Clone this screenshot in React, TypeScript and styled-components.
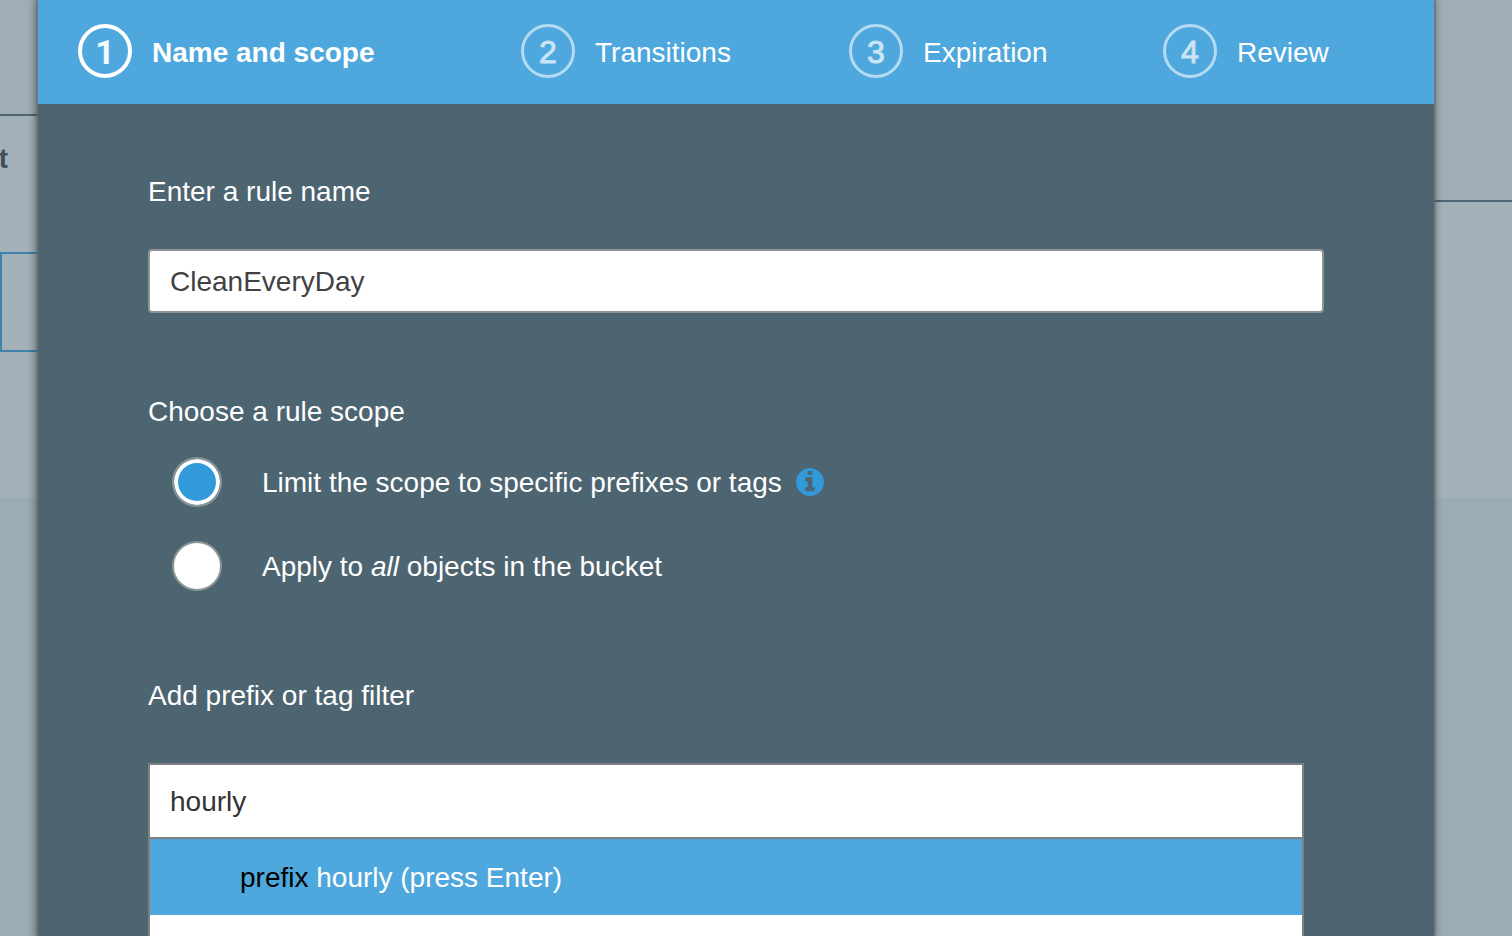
import React, { useState } from "react";
import styled, { createGlobalStyle } from "styled-components";

const GlobalStyle = createGlobalStyle`
  *, *::before, *::after { box-sizing: border-box; }
  body {
    margin: 0;
    background: #9bacb6;
    color: #ffffff;
    font: 28px/40px "Liberation Sans", Arial, sans-serif;
  }
  button, input { font: inherit; }
`;

const Page = styled.div`
  display: grid;
  grid-template-columns: 38px minmax(0, 1fr) 78px;
  min-height: 100vh;
`;

const Backdrop = styled.div`
  display: flex;
  flex-direction: column;
  overflow: hidden;
`;

const BackdropBar = styled.div<{ $height: number }>`
  height: ${(p) => p.$height}px;
  background: #a1adb5;
  border-bottom: 2px solid #4c6678;
`;

const BackdropPanel = styled.div<{ $height: number }>`
  height: ${(p) => p.$height}px;
  background: #a5b1b9;
`;

const ColumnTitle = styled.div`
  padding: 23px 0 73px;
  display: flex;
  justify-content: flex-end;
  width: 8px;
  color: #444f57;
  font-weight: bold;
`;

const BackdropField = styled.div`
  height: 100px;
  border: 2px solid #3f82ae;
  border-right: 0;
`;

const Dialog = styled.main`
  position: relative;
  display: flex;
  flex-direction: column;
  background: #4d6471;
  box-shadow: 0 0 0 2px rgba(110, 110, 110, 0.6), -1px 0 8px 2px rgba(0, 0, 0, 0.4);
  clip-path: inset(0 -20px);
`;

const Steps = styled.ol`
  display: grid;
  grid-template-columns: 443fr 328fr 314fr 271fr;
  margin: 0;
  padding: 24px 0 22px 40px;
  list-style: none;
  background: #4ea8dd;
`;

const StepButton = styled.button<{ $active: boolean }>`
  display: flex;
  align-items: flex-start;
  gap: 20px;
  padding: 0;
  border: 0;
  background: none;
  color: #ffffff;
  font-weight: ${(p) => (p.$active ? "bold" : "normal")};
  line-height: 58px;
  white-space: nowrap;
  cursor: pointer;
`;

const StepNumber = styled.span<{ $active: boolean }>`
  display: flex;
  align-items: center;
  justify-content: center;
  width: 54px;
  height: 54px;
  padding-top: 2px;
  border: ${(p) => (p.$active ? "4px solid #ffffff" : "3px solid #b5dbf1")};
  border-radius: 50%;
  color: ${(p) => (p.$active ? "#f4fafd" : "#d0e8f6")};
  font-family: ${(p) => (p.$active ? "Roboto" : '"Liberation Sans"')}, sans-serif;
  font-size: ${(p) => (p.$active ? 34 : 32)}px;
  font-weight: ${(p) => (p.$active ? 700 : 400)};
  -webkit-text-stroke: ${(p) => (p.$active ? "0" : "1px #c4e2f4")};
`;

const Form = styled.form`
  display: flex;
  flex: 1;
  flex-direction: column;
  padding: 68px 110px 0;
`;

const Label = styled.label`
  display: block;
`;

const NameInput = styled.input`
  height: 64px;
  margin: 37px 0 79px;
  padding: 2px 20px 0;
  border: 2px solid #8c9494;
  border-radius: 4px;
  outline: 0;
  background: #ffffff;
  color: #3f4145;
`;

const ScopeGroup = styled.fieldset`
  display: flex;
  flex-direction: column;
  gap: 34px;
  min-width: 0;
  margin: 0 0 85px;
  padding: 0 0 0 24px;
  border: 0;
`;

const ScopeTitle = styled.legend`
  margin: 0 0 25px -24px;
  padding: 0;
`;

const ScopeRow = styled.div`
  display: flex;
  align-items: center;
  height: 50px;
`;

const ScopeLabel = styled(Label)`
  padding-top: 2px;
`;

const Radio = styled.input`
  appearance: none;
  width: 50px;
  height: 50px;
  margin: 0 40px 0 0;
  border: 2px solid #8c9494;
  border-radius: 50%;
  background: #ffffff;
  cursor: pointer;

  &:checked {
    background: #329ad9;
    background-clip: padding-box;
    box-shadow: inset 0 0 0 4px #ffffff;
  }
`;

const InfoButton = styled.button`
  display: flex;
  margin-left: 14px;
  padding: 0;
  border: 0;
  background: none;
  color: #329ad9;
  cursor: pointer;
`;

const Combo = styled.div`
  display: flex;
  flex: 1;
  flex-direction: column;
  margin: 47px 20px 0 0;
  border: 2px solid #808080;
  border-bottom: 0;
  background: #ffffff;
`;

const FilterInput = styled.input`
  height: 74px;
  padding: 2px 20px 0;
  border: 0;
  border-bottom: 2px solid #808080;
  outline: 0;
  background: #ffffff;
  color: #333333;
`;

const Suggestions = styled.ul`
  margin: 0;
  padding: 0;
  list-style: none;
`;

const Suggestion = styled.li`
  padding: 19px 90px 17px;
  background: #4ea8dd;
  cursor: pointer;
`;

const Kind = styled.span`
  color: #000000;
`;

const steps = ["Name and scope", "Transitions", "Expiration", "Review"];

function InfoIcon() {
  return (
    <svg width="28" height="28" viewBox="0 0 1536 1536" fill="currentColor" aria-hidden="true">
      <path d="M1024 1248v-160q0-14-9-23t-23-9h-96v-512q0-14-9-23t-23-9h-320q-14 0-23 9t-9 23v160q0 14 9 23t23 9h96v320h-96q-14 0-23 9t-9 23v160q0 14 9 23t23 9h448q14 0 23-9t9-23zM896 352v-160q0-14-9-23t-23-9h-192q-14 0-23 9t-9 23v160q0 14 9 23t23 9h192q14 0 23-9t9-23zM1536 768q0 209-103 385.5t-279.5 279.5-385.5 103-385.5-103-279.5-279.5-103-385.5 103-385.5 279.5-279.5 385.5-103 385.5 103 279.5 279.5 103 385.5z" />
    </svg>
  );
}

export default function App() {
  const [name, setName] = useState("CleanEveryDay");
  const [scope, setScope] = useState("limited");
  const [filter, setFilter] = useState("hourly");

  return (
    <>
      <GlobalStyle />
      <Page>
        <Backdrop>
          <BackdropBar $height={116} />
          <BackdropPanel $height={382}>
            <ColumnTitle>t</ColumnTitle>
            <BackdropField />
          </BackdropPanel>
        </Backdrop>

        <Dialog>
          <Steps>
            {steps.map((step, i) => (
              <li key={step}>
                <StepButton type="button" $active={i === 0} aria-current={i === 0 ? "step" : undefined}>
                  <StepNumber $active={i === 0}>{i + 1}</StepNumber>
                  {step}
                </StepButton>
              </li>
            ))}
          </Steps>

          <Form onSubmit={(e) => e.preventDefault()}>
            <Label htmlFor="rule-name">Enter a rule name</Label>
            <NameInput id="rule-name" value={name} spellCheck={false} onChange={(e) => setName(e.target.value)} />

            <ScopeGroup>
              <ScopeTitle>Choose a rule scope</ScopeTitle>
              <ScopeRow>
                <Radio
                  type="radio"
                  name="scope"
                  id="scope-limited"
                  checked={scope === "limited"}
                  onChange={() => setScope("limited")}
                />
                <ScopeLabel htmlFor="scope-limited">Limit the scope to specific prefixes or tags</ScopeLabel>
                <InfoButton type="button" aria-label="About rule scope">
                  <InfoIcon />
                </InfoButton>
              </ScopeRow>
              <ScopeRow>
                <Radio
                  type="radio"
                  name="scope"
                  id="scope-all"
                  checked={scope === "all"}
                  onChange={() => setScope("all")}
                />
                <ScopeLabel htmlFor="scope-all">
                  Apply to <em>all</em> objects in the bucket
                </ScopeLabel>
              </ScopeRow>
            </ScopeGroup>

            <Label htmlFor="filter">Add prefix or tag filter</Label>
            <Combo>
              <FilterInput
                id="filter"
                role="combobox"
                aria-expanded="true"
                aria-controls="filter-options"
                autoComplete="off"
                value={filter}
                onChange={(e) => setFilter(e.target.value)}
              />
              <Suggestions id="filter-options" role="listbox">
                <Suggestion role="option" aria-selected="true">
                  <Kind>prefix</Kind> {filter} (press Enter)
                </Suggestion>
              </Suggestions>
            </Combo>
          </Form>
        </Dialog>

        <Backdrop>
          <BackdropBar $height={202} />
          <BackdropPanel $height={296} />
        </Backdrop>
      </Page>
    </>
  );
}
